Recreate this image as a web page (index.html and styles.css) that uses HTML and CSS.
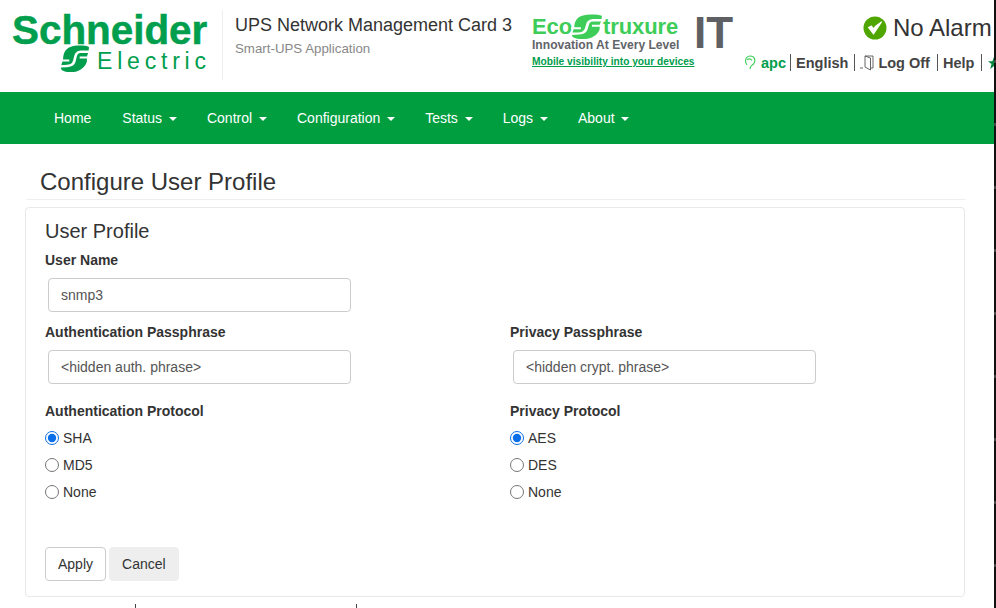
FILE: index.html
```html
<!DOCTYPE html>
<html lang="en">
<head>
    <meta charset="UTF-8">
    <title>Configure User Profile</title>
    <link rel="stylesheet" href="styles.css">
</head>
<body>
    <header class="top">
        <div class="brand">
            <div class="brand-name">Schneider</div>
            <div class="brand-sub">
                <svg class="se-mark" width="30" height="28" viewBox="0 0 29 29" preserveAspectRatio="none">
                    <path d="M10 2 C15 0 24 0 28 2 C28 6 27 9 26 12 L26 17 C24 24 18 28 11 28 C6 28 1 27 1 24 C1 21 2 18 3 15 C3 9 5 4 10 2 Z" fill="#009e4d"/>
                    <path d="M29 7 H20 C15 7 15 12 14 16 C13 21 10 22 1 22" fill="none" stroke="#fff" stroke-width="2.6"/>
                    <path d="M28 13 H19 M0 16 H9" fill="none" stroke="#fff" stroke-width="2.2"/>
                </svg>
                <span class="brand-electric">Electric</span>
            </div>
        </div>
        <div class="product">
            <div class="product-name">UPS Network Management Card 3</div>
            <div class="product-app">Smart-UPS Application</div>
        </div>
        <div class="eco">
            <div class="eco-logo">
                <span>Eco</span>
                <svg width="32" height="26" viewBox="0 0 29 29" preserveAspectRatio="none">
                    <path d="M10 2 C15 0 24 0 28 2 C28 6 27 9 26 12 L26 17 C24 24 18 28 11 28 C6 28 1 27 1 24 C1 21 2 18 3 15 C3 9 5 4 10 2 Z" fill="#3dcd58"/>
                    <path d="M29 7 H20 C15 7 15 12 14 16 C13 21 10 22 1 22" fill="none" stroke="#fff" stroke-width="2.6"/>
                    <path d="M28 13 H19 M0 16 H9" fill="none" stroke="#fff" stroke-width="2.2"/>
                </svg>
                <span>truxure</span>
            </div>
            <div class="eco-tag">Innovation At Every Level</div>
            <a class="eco-link" href="#">Mobile visibility into your devices</a>
        </div>
        <div class="eco-it">IT</div>
        <div class="status">
            <div class="alarm">
                <svg width="24" height="24" viewBox="0 0 24 24">
                    <circle cx="12" cy="12" r="11.5" fill="#4fa600"/>
                    <path d="M5.5 11.5 L10.5 18 L18.5 6 L13 10 L10.5 13 L8.5 10 Z" fill="#fff" stroke="#fff" stroke-width="1.2" stroke-linejoin="round"/>
                </svg>
                <span>No Alarm</span>
            </div>
            <div class="user-links">
                <svg class="user-icon" width="12" height="15" viewBox="0 0 12 15">
                    <path d="M3 10 C0.5 7 1 1.5 6 1 C11 0.8 12 6 9.5 9 C8.5 10 7 10.5 6.5 12 L6 14 M3 4.5 C5 3.5 7 4 8 5.5" fill="none" stroke="#3dcd58" stroke-width="1.1"/>
                </svg>
                <a class="user-name" href="#">apc</a>
                <a class="user-link user-english" href="#">English</a>
                <a class="user-link" href="#">
                    <svg width="15" height="16" viewBox="0 0 15 16">
                        <path d="M5 12 V1 H13 V13 H11 M5 1 L10.5 3 V15 L5 12 M0 13 H3" fill="none" stroke="#555" stroke-width="0.9"/>
                    </svg>
                    <span>Log Off</span>
                </a>
                <a class="user-link" href="#">Help</a>
                <span class="user-link user-star">
                    <svg width="12" height="12" viewBox="0 0 12 12">
                        <path d="M6 0 L7.6 4.2 H12 L8.5 7 L9.8 12 L6 9 L2.2 12 L3.5 7 L0 4.2 H4.4 Z" fill="#00853f"/>
                    </svg>
                </span>
            </div>
        </div>
    </header>

    <nav class="menu">
        <a href="#">Home</a>
        <a href="#">Status <i class="caret"></i></a>
        <a href="#">Control <i class="caret"></i></a>
        <a href="#">Configuration <i class="caret"></i></a>
        <a href="#">Tests <i class="caret"></i></a>
        <a href="#">Logs <i class="caret"></i></a>
        <a href="#">About <i class="caret"></i></a>
    </nav>

    <main class="content">
        <h1 class="page-title">Configure User Profile</h1>
        <form class="panel">
            <h2 class="panel-title">User Profile</h2>
            <div class="field-single">
                <label class="field-label">User Name</label>
                <input class="text-input" type="text" value="snmp3">
            </div>
            <div class="field-row">
                <div>
                    <label class="field-label">Authentication Passphrase</label>
                    <input class="text-input" type="text" value="&lt;hidden auth. phrase&gt;">
                </div>
                <div>
                    <label class="field-label">Privacy Passphrase</label>
                    <input class="text-input" type="text" value="&lt;hidden crypt. phrase&gt;">
                </div>
            </div>
            <div class="field-row">
                <div>
                    <div class="field-label protocol-label">Authentication Protocol</div>
                    <label class="radio"><input type="radio" name="auth" checked>SHA</label>
                    <label class="radio"><input type="radio" name="auth">MD5</label>
                    <label class="radio"><input type="radio" name="auth">None</label>
                </div>
                <div>
                    <div class="field-label protocol-label">Privacy Protocol</div>
                    <label class="radio"><input type="radio" name="priv" checked>AES</label>
                    <label class="radio"><input type="radio" name="priv">DES</label>
                    <label class="radio"><input type="radio" name="priv">None</label>
                </div>
            </div>
            <div class="actions">
                <button class="btn" type="button">Apply</button>
                <button class="btn btn-cancel" type="button">Cancel</button>
            </div>
        </form>
        <div class="ticks"><i></i><i></i></div>
    </main>

    <div class="window-edge"></div>
</body>
</html>
```

FILE: styles.css
```css
html, body {
    height: 608px;
    overflow: hidden;
}
body {
    margin: 0;
    font-family: "Liberation Sans", Arial, sans-serif;
    font-size: 14px;
    color: #333;
    background: #fff;
}
a {
    text-decoration: none;
}

/* header */
.top {
    display: flex;
    height: 92px;
    width: 1040px;
}
.brand {
    width: 210px;
    height: 70px;
    margin: 10px 0 0 12px;
    border-right: 1px solid #eee;
    color: #009e4d;
}
.brand-name {
    font-size: 40.4px;
    font-weight: bold;
    line-height: 34px;
    height: 34px;
    margin-top: 3px;
    -webkit-text-stroke: 0.5px #009e4d;
}
.brand-sub {
    display: flex;
    align-items: center;
    margin-left: 48px;
    height: 24px;
}
.se-mark {
    flex: none;
}
.brand-electric {
    font-size: 23px;
    letter-spacing: 4.8px;
    margin-left: 7px;
    line-height: 20px;
    margin-top: 4px;
}
.product {
    width: 297px;
    padding: 15px 0 0 12px;
}
.product-name {
    font-size: 18px;
    line-height: 20px;
    color: #333;
}
.product-app {
    font-size: 13.3px;
    line-height: 16px;
    margin-top: 6px;
    color: #888;
}
.eco {
    width: 162px;
    padding-top: 13px;
}
.eco-logo {
    display: flex;
    align-items: center;
    height: 28px;
    font-size: 22px;
    font-weight: bold;
    letter-spacing: -0.1px;
    color: #3dcd58;
}
.eco-logo svg {
    margin: 0 0 0 -1px;
}
.eco-tag {
    font-size: 12.1px;
    font-weight: bold;
    color: #626469;
    line-height: 14px;
    margin-top: -3px;
}
.eco-link {
    display: block;
    font-size: 10.2px;
    font-weight: bold;
    line-height: 14px;
    margin-top: 3px;
    color: #009e4d;
    text-decoration: underline;
    white-space: nowrap;
}
.eco-it {
    width: 49px;
    padding-top: 11px;
    font-size: 44px;
    font-weight: bold;
    line-height: 44px;
    color: #5f6064;
}
.status {
    flex: none;
    padding-top: 16px;
}
.alarm {
    display: flex;
    align-items: center;
    height: 24px;
    margin-left: 120px;
    font-size: 24px;
    color: #333;
    white-space: nowrap;
}
.alarm svg {
    margin-right: 6px;
}
.user-links {
    display: flex;
    align-items: center;
    margin: 13px 0 0 1px;
    height: 19px;
    font-weight: bold;
    white-space: nowrap;
    font-size: 14.5px;
}
.user-icon {
    margin-right: 5px;
}
.user-name {
    color: #009e4d;
    padding-right: 4px;
}
.user-link {
    display: flex;
    align-items: center;
    gap: 3px;
    color: #444;
    padding: 0 7px 0 5px;
    border-left: 1px solid #555;
    height: 17px;
}
.user-english {
    padding-right: 6px;
}
.user-star {
    padding: 0 0 0 6px;
}
.user-star svg {
    flex: none;
}

/* green bar */
.menu {
    display: flex;
    height: 52px;
    padding-left: 39px;
    background: #009e3f;
}
.menu a {
    padding: 0 15px;
    line-height: 52px;
    color: #fff;
    font-size: 14px;
}
.menu a:first-child {
    padding-right: 16px;
}
.caret {
    display: inline-block;
    width: 0;
    height: 0;
    margin-left: 3px;
    vertical-align: middle;
    border-top: 4px solid #fff;
    border-left: 4px solid transparent;
    border-right: 4px solid transparent;
}

/* form */
.content {
    padding: 0 31px 0 25px;
}
.page-title {
    margin: 0 0 7px 2px;
    padding: 24px 0 4px 13px;
    border-bottom: 1px solid #eee;
    font-size: 24px;
    font-weight: normal;
    line-height: 27px;
    color: #333;
}
.panel {
    height: 390px;
    box-sizing: border-box;
    padding: 12px 19px 0;
    border: 1px solid #e8e8e8;
    border-radius: 4px;
}
.panel-title {
    margin: 0;
    font-size: 20px;
    font-weight: normal;
    line-height: 22px;
    color: #333;
}
.field-label {
    display: block;
    font-weight: bold;
    line-height: 20px;
    color: #333;
}
.field-single {
    margin-top: 8px;
    height: 62px;
}
.field-row {
    display: grid;
    grid-template-columns: 465px 1fr;
    margin-top: 10px;
}
.text-input {
    display: block;
    box-sizing: border-box;
    width: 303px;
    height: 34px;
    margin: 8px 0 0 3px;
    padding: 6px 12px;
    border: 1px solid #ccc;
    border-radius: 4px;
    font-family: inherit;
    font-size: 14px;
    color: #555;
}
.protocol-label {
    margin-top: 7px;
}
.radio {
    display: flex;
    align-items: center;
    height: 20px;
    margin-top: 7px;
    line-height: 20px;
}
.radio input {
    width: 14px;
    height: 14px;
    margin: 0 4px 0 0;
    accent-color: #0a6fe8;
}
.actions {
    margin-top: 45px;
    display: flex;
    gap: 3px;
}
.btn {
    height: 34px;
    padding: 6px 12px;
    border: 1px solid #ccc;
    border-radius: 4px;
    background: #fff;
    font-family: inherit;
    font-size: 14px;
    color: #333;
}
.btn-cancel {
    border-color: #eee;
    background: #eee;
}
.ticks {
    display: flex;
    height: 4px;
    margin-top: 7px;
    padding-left: 110px;
    gap: 220px;
}
.ticks i {
    width: 1px;
    background: #444;
}
.window-edge {
    position: absolute;
    top: 0;
    right: 0;
    width: 2px;
    height: 608px;
    background: repeating-linear-gradient(#111 0 60px, #444 60px 63px);
}
```
